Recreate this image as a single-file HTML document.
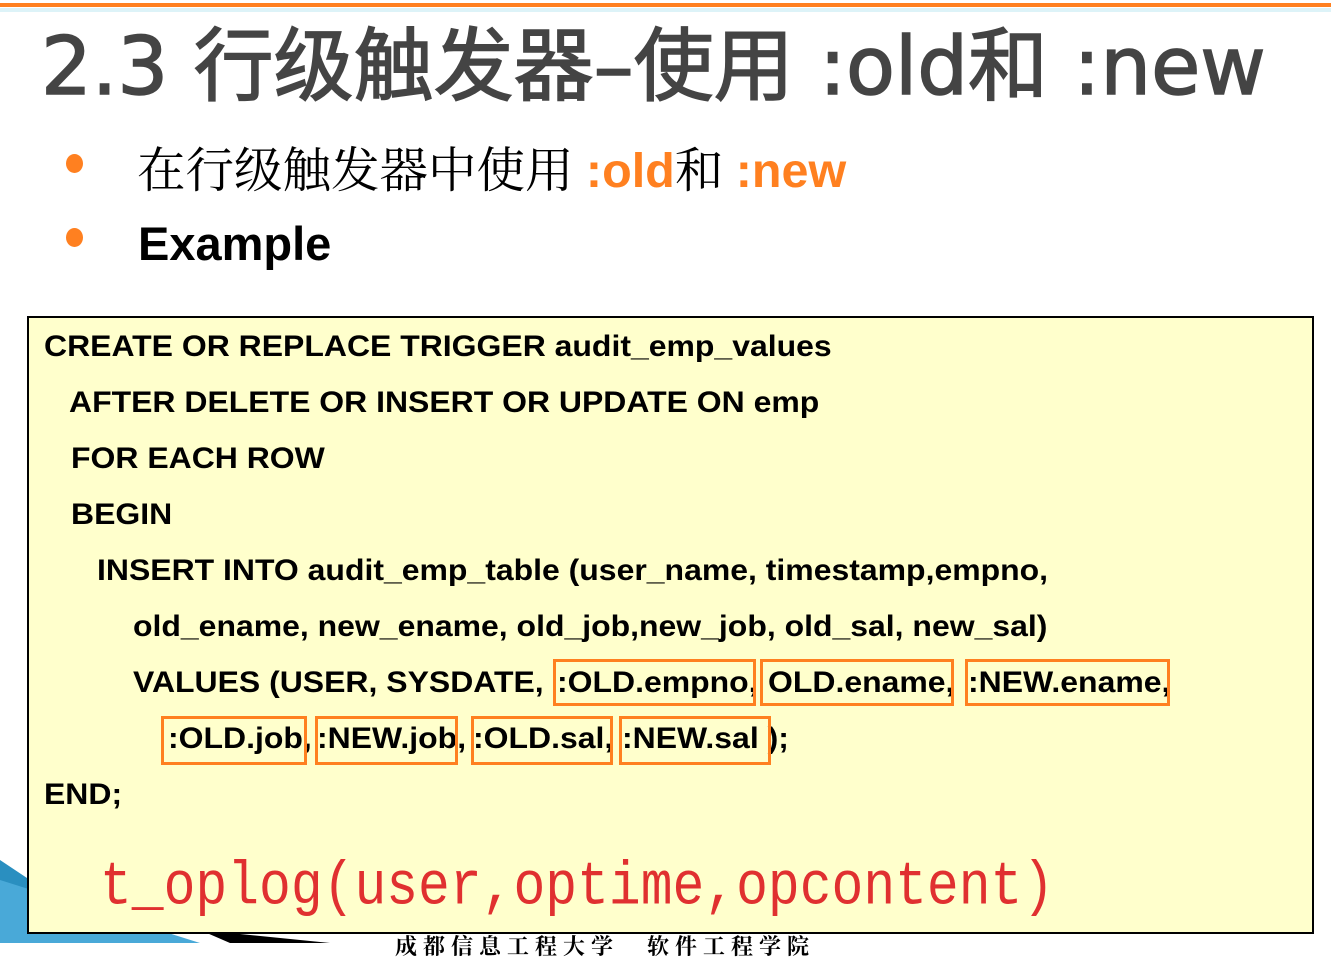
<!DOCTYPE html>
<html><head><meta charset="utf-8"><style>
body{margin:0;width:1331px;height:943px;overflow:hidden;background:#fff;position:relative;font-family:"Liberation Sans","Noto Sans CJK SC",sans-serif}
.abs{position:absolute;white-space:nowrap}
.code{position:absolute;font-weight:bold;font-size:30px;line-height:1;color:#000;white-space:nowrap;transform:scaleX(1.065);transform-origin:left top}
.ob{position:absolute;border:3px solid #ff8020;box-sizing:border-box}
</style></head><body>
<div class="abs" style="left:0;top:3px;width:1331px;height:4px;background:#ff8020"></div>
<div class="abs" style="left:0;top:8px;width:1331px;height:4px;background:#ddf3f8"></div>
<div class="abs" style="left:41px;top:2px;font-size:80px;color:#444;font-family:'DejaVu Sans','Noto Sans CJK SC',sans-serif;-webkit-text-stroke:1.5px #444">2.3 行级触发器–使用 :old和 :new</div>
<div class="abs" style="left:66px;top:154px;width:17px;height:19px;border-radius:50%;background:#ff8020"></div>
<div class="abs" style="left:66px;top:228px;width:17px;height:19px;border-radius:50%;background:#ff8020"></div>
<div class="abs" style="left:137px;top:131px;font-size:48.5px;font-family:'Noto Serif CJK SC',serif;color:#000">在行级触发器中使用 <span style="font-family:'Liberation Sans',sans-serif;font-weight:bold;color:#ff8020">:old</span>和 <span style="font-family:'Liberation Sans',sans-serif;font-weight:bold;color:#ff8020">:new</span></div>
<div class="abs" style="left:138px;top:216px;font-size:47px;font-weight:bold;color:#000">Example</div>
<svg class="abs" style="left:0;top:840px" width="420" height="103"><polygon points="0,20 60,60 0,60" fill="#2a8fc0"/><polygon points="0,40 200,103 0,103" fill="#49a9d8"/><polygon points="200,90 330,103 230,103" fill="#000"/></svg>
<div class="abs" style="left:395px;top:930px;font-size:22px;color:#000;font-family:'Noto Serif CJK SC',serif;letter-spacing:6px;font-weight:bold">成都信息工程大学　软件工程学院</div>
<div class="abs" style="left:27px;top:316px;width:1287px;height:618px;box-sizing:border-box;border:2px solid #000;background:#ffffcc"></div>
<div class="code" style="left:44px;top:332px">CREATE OR REPLACE TRIGGER audit_emp_values</div>
<div class="code" style="left:69px;top:388px">AFTER DELETE OR INSERT OR UPDATE ON emp</div>
<div class="code" style="left:71px;top:444px">FOR EACH ROW</div>
<div class="code" style="left:71px;top:500px">BEGIN</div>
<div class="code" style="left:97px;top:556px">INSERT INTO audit_emp_table (user_name, timestamp,empno,</div>
<div class="code" style="left:133px;top:612px">old_ename, new_ename, old_job,new_job, old_sal, new_sal)</div>
<div class="code" style="left:133px;top:668px">VALUES (USER, SYSDATE,</div>
<div class="code" style="left:557px;top:668px">:OLD.empno,</div>
<div class="code" style="left:768px;top:668px">OLD.ename,</div>
<div class="code" style="left:968px;top:668px">:NEW.ename,</div>
<div class="code" style="left:168px;top:724px">:OLD.job,</div>
<div class="code" style="left:317px;top:724px">:NEW.job,</div>
<div class="code" style="left:473px;top:724px">:OLD.sal,</div>
<div class="code" style="left:622px;top:724px">:NEW.sal );</div>
<div class="code" style="left:44px;top:780px">END;</div>
<div class="ob" style="left:553px;top:659px;width:203px;height:47px"></div>
<div class="ob" style="left:760px;top:659px;width:194px;height:47px"></div>
<div class="ob" style="left:965px;top:659px;width:205px;height:47px"></div>
<div class="ob" style="left:161px;top:716px;width:146px;height:49px"></div>
<div class="ob" style="left:315px;top:716px;width:143px;height:49px"></div>
<div class="ob" style="left:471px;top:716px;width:142px;height:49px"></div>
<div class="ob" style="left:619px;top:716px;width:152px;height:49px"></div>
<div class="abs" style="left:100px;top:854px;font-size:53px;line-height:1.1;font-family:'Liberation Mono','Noto Serif CJK SC',monospace;color:#e03030;transform:scaleY(1.15);transform-origin:left top">t_oplog(user,optime,opcontent)</div>
</body></html>
